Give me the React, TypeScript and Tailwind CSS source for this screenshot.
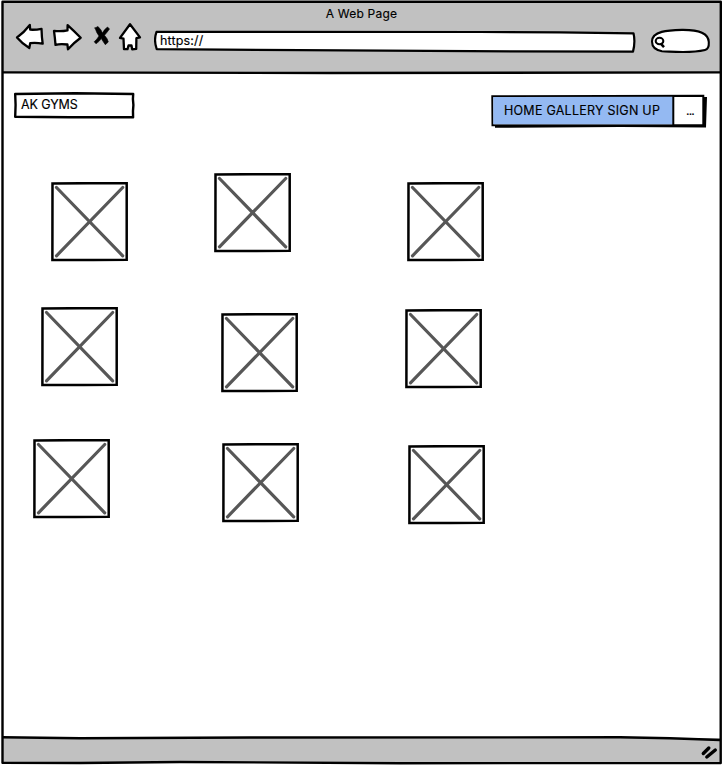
import type { ReactNode } from "react";

function Label({ className, children }: { className: string; children: ReactNode }) {
  return (
    <span
      className={`whitespace-nowrap font-['Inter',sans-serif] leading-4 text-black [-webkit-text-stroke:0.15px_black] ${className}`}
    >
      {children}
    </span>
  );
}

function NavIcons() {
  return (
    <svg className="ml-[14px] mt-[20px] h-8 w-[130px] shrink-0" viewBox="14 20 130 32" fill="white" stroke="black" strokeWidth="2.3" strokeLinejoin="round" strokeLinecap="round">
      <path d="M17 37.5 Q24 32.5 29.8 25 L30.2 29.7 Q36 30 41.5 28.8 Q41.7 37 42.7 43.7 Q36 42.5 30.2 43.2 L29.3 48 Q22 43.5 17 37.5Z" />
      <path d="M54 30.8 Q61 31.8 67.5 30.4 L67.6 25.2 Q74 31 80.7 37.8 Q73.5 43 68 49.3 L67.4 44.5 Q60 43.6 55.5 44.9 Q55 38 54 30.8Z" />
      <path d="M95 28 L98 26.5 Q101.5 30 102.5 33 Q104.5 29 107.5 27 L109.5 29 Q107 32.5 104.5 35.3 Q107.5 38.5 108.3 42 L105.3 44.7 Q103 41.5 101.3 38.6 Q99.5 41.5 96 43.8 L94.2 41.7 Q97 39.5 99 36 Q96.5 33 95 28Z" fill="black" strokeWidth="0.6" />
      <path d="M130 24.2 L140 37.4 L136.4 38.2 L136.2 48.9 L132.2 49.4 L131.5 45.5 L128.5 45.5 L127.5 49.2 L124 49.1 L123.5 38.7 L120 37.9 Q125 31 130 24.2Z" />
    </svg>
  );
}

function AddressBar() {
  return (
    <div className="relative ml-[10px] mt-[30px] h-[23px] w-[482px] shrink-0">
      <svg className="absolute inset-0 h-full w-full" viewBox="154 30 482 23" fill="white" stroke="black" strokeWidth="2.2" strokeLinejoin="round">
        <path d="M156.5 31.8 L480 32 L560 32.4 L633.5 33.3 Q635.5 42 633 51.6 L470 51.2 L300 50.2 L156.7 49.2 Q153.5 40 156.5 31.8Z" />
      </svg>
      <Label className="absolute left-[6px] top-[3px] text-[12.5px] tracking-[0.15px]">https://</Label>
    </div>
  );
}

function SearchPill() {
  return (
    <svg className="ml-[14px] mt-[28px] h-[26px] w-[62px] shrink-0" viewBox="650 28 62 26" fill="white" stroke="black" strokeWidth="2.1">
      <path d="M652 41.5 C652 31 668 30.2 682 29.9 C701 29.7 708.5 34 708.8 42 Q709.2 49 705 50 C690 53.5 676 51.8 662 51.2 Q652 49.5 652 41.5Z" />
      <ellipse cx="659.5" cy="41" rx="3.8" ry="3.2" />
      <path d="M661 43.8 L664 47.2" strokeWidth="2.5" />
    </svg>
  );
}

function Placeholder({ className }: { className: string }) {
  return (
    <svg className={`h-[80px] w-[78px] shrink-0 ${className}`} viewBox="0 0 78 80" fill="white">
      <path d="M1.5 1.4 L38 1.2 L75.7 1.2 L75.7 77.7 L42 78 L1.4 78Z" stroke="black" strokeWidth="2.5" />
      <path d="M5.5 5.5 L71.7 73.8 M71.7 5.5 L5.5 73.8" stroke="#575757" strokeWidth="3.2" strokeLinecap="round" />
    </svg>
  );
}

function LogoField() {
  return (
    <div className="relative h-[28px] w-[123px]">
      <svg className="absolute inset-0 h-full w-full" viewBox="13 91 123 28" fill="white" stroke="black" strokeWidth="2.4" strokeLinejoin="round">
        <path d="M15.2 94 L75 93.2 L133.2 94 Q132.5 99 133.4 105 Q132.7 111 133.1 117.3 L70 117.2 L15.2 116.8 Q16 105 15.2 94Z" />
      </svg>
      <Label className="absolute left-[8px] top-[6px] text-[12.5px] tracking-[-0.1px]">AK GYMS</Label>
    </div>
  );
}

function ButtonBar() {
  return (
    <div className="relative flex h-[34px] w-[218px]">
      <svg className="absolute inset-0 h-full w-full" viewBox="490 94 218 34">
        <path d="M495 98 L707 97 L706 127.6 L620 127 L495 127.8Z" fill="black" />
        <path d="M492.3 96.2 L703.3 95.8 L703.3 125.3 L492.5 125.3Z" fill="white" stroke="black" strokeWidth="2" />
        <path d="M493.3 97 L673 96.8 L673 124.3 L493.3 124.3Z" fill="#94b9f2" />
        <path d="M673.3 96 V125.5" stroke="black" strokeWidth="2" />
      </svg>
      <Label className="relative ml-[14px] mt-[9px] w-[169px] text-[12.5px] tracking-[0.25px]">HOME GALLERY SIGN UP</Label>
      <Label className="relative ml-[13px] mt-[9px] text-[12px] tracking-[-0.8px]">...</Label>
    </div>
  );
}

function WindowFrame() {
  return (
    <svg className="pointer-events-none absolute inset-0 h-full w-full" viewBox="0 0 723 765" fill="none" stroke="black" strokeWidth="2.4" strokeLinejoin="round">
      <path d="M2.5 1.8 L720.8 1.7 L720.7 763 L400 763.2 L180 762 L80 763 L2.5 762.8Z" />
      <path d="M2.5 72.4 L330 73 L721 72.4" />
      <path d="M2.5 737.2 L80 738.2 L250 737.5 L620 737.3 Q670 738 720 740" />
      <path d="M703.3 753.5 L708.8 748 M706.8 757 L715.3 750" strokeWidth="3.4" strokeLinecap="round" />
    </svg>
  );
}

export default function App() {
  return (
    <div className="relative flex h-[765px] w-[723px] flex-col overflow-hidden bg-white">
      <header className="relative mx-[2px] mt-[1px] h-[72px] shrink-0 bg-[#c1c1c1]">
        <div className="-mx-[2px] -mt-[1px] flex h-[72px] items-start">
          <NavIcons />
          <AddressBar />
          <SearchPill />
        </div>
        <Label className="absolute inset-x-0 top-[5px] text-center text-[12px] tracking-[0.2px]">A Web Page</Label>
      </header>
      <main className="h-[665px] shrink-0">
        <div className="flex pl-[13px] pt-[18px]">
          <LogoField />
          <div className="ml-[354px] mt-[3px]">
            <ButtonBar />
          </div>
        </div>
        <div className="mt-[45px] flex h-[134px]">
          <Placeholder className="ml-[51px] mt-[9px]" />
          <Placeholder className="ml-[85px]" />
          <Placeholder className="ml-[115px] mt-[9px]" />
        </div>
        <div className="flex h-[132px]">
          <Placeholder className="ml-[41px]" />
          <Placeholder className="ml-[102px] mt-[6px]" />
          <Placeholder className="ml-[106px] mt-[2px]" />
        </div>
        <div className="flex">
          <Placeholder className="ml-[33px]" />
          <Placeholder className="ml-[111px] mt-[4px]" />
          <Placeholder className="ml-[108px] mt-[6px]" />
        </div>
      </main>
      <footer className="mx-[2px] h-[25px] shrink-0 bg-[#c1c1c1]" />
      <WindowFrame />
    </div>
  );
}
